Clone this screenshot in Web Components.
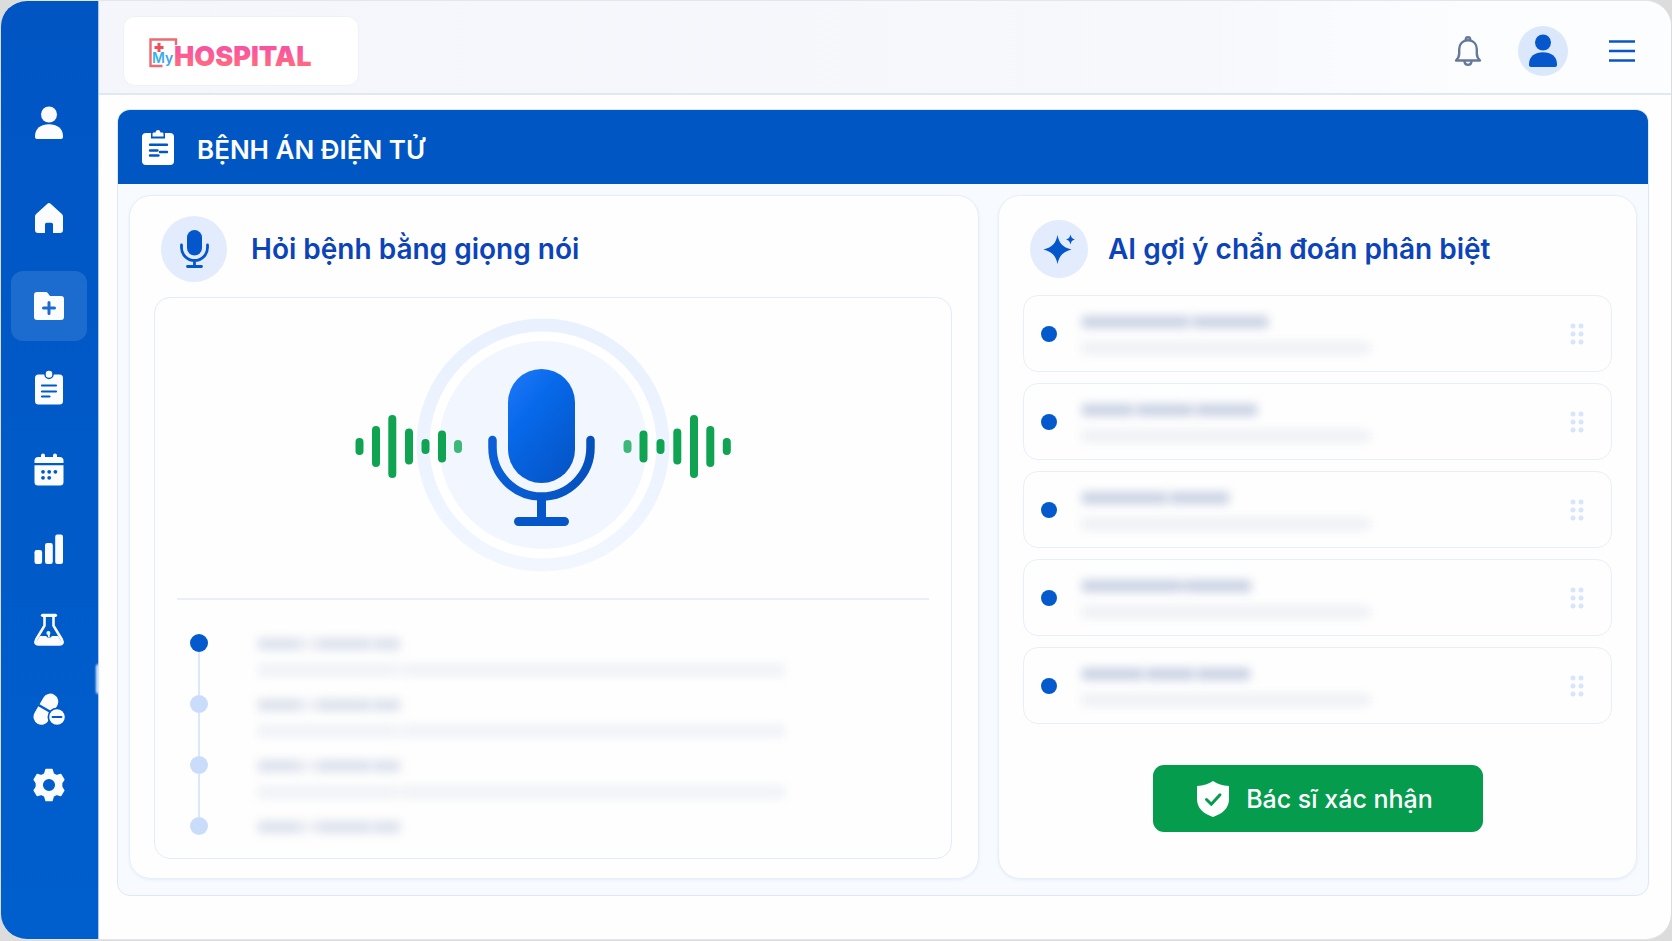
<!DOCTYPE html>
<html lang="vi">
<head>
<meta charset="utf-8">
<meta name="viewport" content="width=device-width, initial-scale=1">
<title>MyHospital – Bệnh án điện tử</title>
<style>
  body { margin: 0; background: #dcdcdc; font-family: Inter, "Noto Sans", sans-serif; }
</style>
</head>
<body>
<hospital-app></hospital-app>

<script>
const define = (name, html, setup) => {
  const tpl = document.createElement('template');
  tpl.innerHTML = html;
  customElements.define(name, class extends HTMLElement {
    constructor() {
      super();
      this.attachShadow({ mode: 'open' }).append(tpl.content.cloneNode(true));
    }
    connectedCallback() {
      if (this.ready) return;
      this.ready = true;
      if (setup) setup(this, this.shadowRoot);
    }
  });
};

/* Icons: [viewBox width, viewBox height, markup]. --cut is the colour behind the icon. */
const ICONS = {
  user: [32, 36, `<circle cx="16" cy="9.5" r="8"/><path d="M2 31c0-7.500 6-11.800 14-11.800S30 23.500 30 31v1c0 1.300-.8 2-2 2H4c-1.200 0-2-.7-2-2z"/>`],
  home: [32, 32, `<path d="M14.400 1.700a2.400 2.400 0 0 1 3.200 0l11 10c.9.800 1.400 1.800 1.400 3V28a3 3 0 0 1-3 3h-7v-8.500c0-1-.7-1.800-1.700-1.800h-4.600c-1 0-1.700.8-1.700 1.800V31H5a3 3 0 0 1-3-3V14.700c0-1.200.5-2.200 1.400-3z"/>`],
  folder: [32, 30, `<path d="M4 1h8.500c1.200 0 2 .5 2.600 1.500L17 5h11a3 3 0 0 1 3 3v18a3 3 0 0 1-3 3H4a3 3 0 0 1-3-3V4a3 3 0 0 1 3-3z"/><path d="M16 11.500v11M10.500 17h11" stroke="var(--cut)" stroke-width="3" stroke-linecap="round"/>`],
  note: [32, 36, `<rect x="2" y="4.500" width="28" height="30" rx="3.500"/><rect x="12" y="0" width="8" height="8.500" rx="4" stroke="var(--cut)" stroke-width="1.500"/><path d="M9 15.500h14M9 21.500h14M9 26.500h7.500" stroke="var(--cut)" stroke-width="2.200" stroke-linecap="round"/>`],
  calendar: [32, 34, `<path d="M5 4h3V2.500a1.500 1.500 0 0 1 4 0V4h8V2.500a1.500 1.500 0 0 1 4 0V4h3c2 0 3.500 1.500 3.500 3.500V10h-29V7.500C1.500 5.500 3 4 5 4z"/><path d="M1.500 12.300h29V29a3.500 3.500 0 0 1-3.500 3.500H5A3.500 3.500 0 0 1 1.500 29z"/><g fill="var(--cut)"><circle cx="10" cy="18.800" r="1.900"/><circle cx="16.200" cy="18.800" r="1.900"/><circle cx="22.400" cy="18.800" r="1.900"/><circle cx="10" cy="24.800" r="1.900"/><circle cx="16.200" cy="24.800" r="1.900"/></g>`],
  chart: [32, 32, `<rect x="1.500" y="17" width="7.600" height="14" rx="2.200"/><rect x="12" y="10" width="7.800" height="21" rx="2.200"/><rect x="22.200" y="1.500" width="7.800" height="29.500" rx="2.200"/>`],
  flask: [32, 34, `<path d="M11.500 2.500v10.200L3.200 26.500C1.600 29.500 2.500 31.500 5.500 31.500h21c3 0 3.900-2 2.300-5L20.500 12.700V2.500" fill="none" stroke="currentColor" stroke-width="2.600"/><path d="M9.500 2.300h13" stroke="currentColor" stroke-width="3.200" stroke-linecap="round"/><path d="M7 23h6l1.500 1.500h3L19 23h6l3.500 5.500c.5 2-.5 3.300-2.500 3.300H6c-2 0-3-1.300-2.500-3.300z"/><circle cx="15.400" cy="20" r="2"/><path d="M15.800 20v4" stroke="currentColor" stroke-width="1.800"/>`],
  pills: [32, 34, `<g transform="rotate(30 13 17)"><path d="M5 16V8.500a8 8 0 0 1 16 0V16z"/><path d="M5 18.500h16V26a8 8 0 0 1-16 0z"/></g><circle cx="24" cy="25" r="9.500" fill="var(--cut)"/><circle cx="24" cy="25" r="7.800"/><path d="M19.500 25h9" stroke="var(--cut)" stroke-width="1.800" stroke-linecap="round"/>`],
  gear: [32, 34, `<path fill-rule="evenodd" d="M13 1.500h6l1.200 4.300 3.300 1.900 4.300-1.200 3 5.200-2.200 3.400v3.800l2.200 3.400-3 5.200-4.300-1.200-3.300 1.900L19 32.500h-6l-1.200-4.300-3.300-1.900-4.300 1.200-3-5.200 2.200-3.400v-3.800L1.200 11.700l3-5.200 4.300 1.200 3.300-1.900zM16 10.200a6.800 6.800 0 1 0 0 13.600 6.800 6.800 0 0 0 0-13.600z" stroke="currentColor" stroke-width="1.500" stroke-linejoin="round"/>`],
  bell: [28, 32, `<g fill="none" stroke="currentColor" stroke-width="2.400" stroke-linejoin="round"><path d="M2 25.500c2-2 3.200-3.800 3.200-7v-4.200c0-5.400 3.500-9 8.800-9s8.800 3.600 8.800 9v4.200c0 3.200 1.200 5 3.200 7z"/><path d="M11.800 5.300V4.500a2.200 2.200 0 0 1 4.400 0v.8"/><path d="M10.500 25.800c0 2.600 1.400 4 3.500 4s3.500-1.400 3.500-4"/></g>`],
  menu: [28, 24, `<path d="M1 2.500h26M1 12h26M1 21.500h26" stroke="currentColor" stroke-width="2.600"/>`],
  clipboard: [34, 38, `<rect x="1" y="5" width="32" height="32" rx="4"/><path d="M10 10.500V6C10 4.300 11 3.500 12.500 3.300h1C14 1.800 15.200 1 17 1s3 .8 3.500 2.300h1C23 3.500 24 4.300 24 6v4.500z" fill="var(--cut)"/><path d="M11.500 8.500V6c0-1 .6-1.600 1.600-1.600h1.500C14.900 2.800 15.700 2 17 2s2.100.8 2.400 2.400h1.500c1 0 1.600.6 1.600 1.600v2.500z"/><path d="M9 16.800h17M9 22.500h7.500M19 24h7M9 27.500h8.500" stroke="var(--cut)" stroke-width="2.400" stroke-linecap="round"/>`],
  mic: [30, 40, `<rect x="8" y="1" width="15" height="25.500" rx="7.500"/><path d="M2.500 16v2.500a13 13 0 0 0 26 0V16M15.500 31.500V37M8.500 37.500h14" fill="none" stroke="currentColor" stroke-width="2.800" stroke-linecap="round"/>`],
  spark: [34, 32, `<path d="M15.500 2c1.800 8.500 5 12 14 14.500-9 2.500-12.200 6-14 14.500-1.800-8.500-5-12-14-14.500 9-2.500 12.200-6 14-14.500z"/><path d="M28.500 1.500c.8 3.200 1.700 4.300 4.500 5-2.800.8-3.700 1.800-4.500 5-.8-3.200-1.700-4.200-4.500-5 2.800-.7 3.700-1.800 4.500-5z"/>`],
  shield: [34, 38, `<path d="M17 1c4.500 3 9.300 4.600 16 5v13c0 9-6 14.500-16 18C7 33.500 1 28 1 19V6c6.700-.4 11.500-2 16-5z"/><path d="M10.500 19.500l4.800 4.800 8.700-9.500" fill="none" stroke="var(--cut)" stroke-width="3" stroke-linecap="round" stroke-linejoin="round"/>`],
  grip: [14, 22, `<circle cx="3" cy="3" r="2.500"/><circle cx="11" cy="3" r="2.500"/><circle cx="3" cy="11" r="2.500"/><circle cx="11" cy="11" r="2.500"/><circle cx="3" cy="19" r="2.500"/><circle cx="11" cy="19" r="2.500"/>`]
};

define('ui-icon', `<style>:host{display:inline-flex;flex:none} svg{display:block}</style>`, (el, root) => {
  const [w, h, body] = ICONS[el.getAttribute('name')];
  root.append(Object.assign(document.createElement('template'), {
    innerHTML: `<svg aria-hidden="true" width="${w}" height="${h}" viewBox="0 0 ${w} ${h}" fill="currentColor">${body}</svg>`
  }).content);
});

/* Sidebar */
define('nav-item', `<style>
  :host { display: flex; align-items: center; justify-content: center; --cut: #0059c7; }
  a { display: flex; align-items: center; justify-content: center; width: 76px; height: 70px; border-radius: 12px; color: #fbfcff; }
  :host([active]) { --cut: #1c6bcf; }
  :host([active]) a { background: #1c6bcf; }
</style><a href="#"><slot></slot></a>`, (el, root) => {
  const a = root.querySelector('a');
  a.setAttribute('aria-label', el.getAttribute('label'));
  if (el.hasAttribute('active')) a.setAttribute('aria-current', 'page');
});

define('side-nav', `<style>
  :host { display: block; position: relative; flex: none; width: 97px; background: linear-gradient(#0055c3, #005fcd); border-right: 1px solid #a9c8f2; }
  nav { display: grid; padding: 74px 11px 0 9px; justify-content: center; grid-template-rows: 96px 94px 82px 82px 82px 76px 86px 72px 80px; }
  .handle { position: absolute; right: -1px; top: 663px; width: 3px; height: 30px; border-radius: 3px 0 0 3px; background: #e8f2ff; filter: blur(1px); }
</style>
<nav aria-label="Chính">
  <nav-item label="Bệnh nhân"><ui-icon name="user"></ui-icon></nav-item>
  <nav-item label="Trang chủ"><ui-icon name="home"></ui-icon></nav-item>
  <nav-item label="Bệnh án" active><ui-icon name="folder"></ui-icon></nav-item>
  <nav-item label="Phiếu khám"><ui-icon name="note"></ui-icon></nav-item>
  <nav-item label="Lịch hẹn"><ui-icon name="calendar"></ui-icon></nav-item>
  <nav-item label="Thống kê"><ui-icon name="chart"></ui-icon></nav-item>
  <nav-item label="Xét nghiệm"><ui-icon name="flask"></ui-icon></nav-item>
  <nav-item label="Thuốc"><ui-icon name="pills"></ui-icon></nav-item>
  <nav-item label="Cài đặt"><ui-icon name="gear"></ui-icon></nav-item>
</nav>
<div class="handle"></div>`);

/* Header */
define('brand-logo', `<style>
  :host { display: flex; align-items: center; box-sizing: border-box; width: 236px; height: 70px; padding-left: 24px; background: #fff; border: 1px solid #edf1f9; border-radius: 12px; }
  svg { display: block; font-family: Inter, sans-serif; }
</style>
<svg width="180" height="50" viewBox="0 0 180 50" role="img" aria-label="MyHOSPITAL">
  <defs>
    <linearGradient id="pink" x1="0" y1="0" x2="0" y2="1"><stop offset=".3" stop-color="#f8559f"/><stop offset=".8" stop-color="#ff6c7c"/></linearGradient>
    <linearGradient id="sky" x1="0" y1="0" x2="1" y2="0"><stop offset="0" stop-color="#2cb8e6"/><stop offset="1" stop-color="#4b9ae8"/></linearGradient>
  </defs>
  <path d="M28 19V13.500H2.500V40h12" fill="none" stroke="#ee6a72" stroke-width="2.400"/>
  <path d="M11 17v9M6.500 21.500h9" stroke="#ee4f56" stroke-width="3"/>
  <text x="4" y="37" font-size="14" font-weight="600" fill="url(#sky)">My</text>
  <text x="26" y="40" font-size="27" font-weight="900" fill="url(#pink)">HOSPITAL</text>
</svg>`);

define('top-bar', `<style>
  :host { display: flex; align-items: center; gap: 36px; box-sizing: border-box; height: 94px; padding: 8px 35px 0 24px; border-bottom: 2px solid #e2e8f1; background: linear-gradient(90deg, #f4f6fb 0%, #f6f8fc 70%, #fcfdff 88%); }
  .grow { flex: 1; }
  button { display: flex; align-items: center; justify-content: center; padding: 0; border: 0; background: none; color: #0d55c4; }
  .bell { color: #66789b; }
  .avatar { width: 50px; height: 50px; border-radius: 50%; background: #dbe8fc; color: #0557cb; }
  .menu { margin-left: 4px; }
</style>
<brand-logo></brand-logo>
<div class="grow"></div>
<button class="bell" aria-label="Thông báo"><ui-icon name="bell"></ui-icon></button>
<button class="avatar" aria-label="Tài khoản"><ui-icon name="user"></ui-icon></button>
<button class="menu" aria-label="Trình đơn"><ui-icon name="menu"></ui-icon></button>`);

/* Card with an icon heading */
define('info-card', `<style>
  :host { display: flex; flex-direction: column; min-width: 0; box-sizing: border-box; background: #fefefe; border: 1px solid #e6eefa; border-radius: 22px; box-shadow: 0 1px 3px #e6eefb; --disc: 66px; --gap: 24px; }
  header { display: flex; align-items: center; gap: var(--gap); height: 66px; padding: 20px 31px 0; }
  .disc { display: flex; align-items: center; justify-content: center; flex: none; width: var(--disc); height: var(--disc); border-radius: 50%; background: #e2ecfc; color: #0456cb; }
  h2 { margin: 0; font-size: 28px; line-height: 36px; font-weight: 600; color: #0b43b8; white-space: nowrap; }
</style>
<header><div class="disc"><slot name="icon"></slot></div><h2><slot name="title"></slot></h2></header>
<slot></slot>`);

/* Redacted text: each number is a word's width; negative numbers are spaces */
define('redacted-line', `<style>
  :host { display: flex; height: 12px; filter: blur(5px); }
  i { display: block; height: 100%; background: var(--ink, #c9d1e3); }
  i.space { opacity: .45; }
</style>`, (el, root) => {
  for (const w of el.getAttribute('words').split(' ').map(Number)) {
    const i = document.createElement('i');
    i.style.width = Math.abs(w) + 'px';
    if (w < 0) i.className = 'space';
    root.append(i);
  }
});

define('voice-stage', `<style>
  :host { display: flex; justify-content: center; margin: 0 22px; padding: 19px 22px 25px 0; border-bottom: 2px solid #e8effb; }
  svg { display: block; }
</style>
<svg width="396" height="256" viewBox="344 317 396 256" role="img" aria-label="Đang ghi âm">
  <defs>
    <linearGradient id="body" x1="0" y1="0" x2=".7" y2="1"><stop offset="0" stop-color="#2079fa"/><stop offset=".4" stop-color="#0769ea"/><stop offset="1" stop-color="#0556c9"/></linearGradient>
    <linearGradient id="arm" x1="0" y1="0" x2="1" y2="0"><stop offset="0" stop-color="#0a5fd8"/><stop offset="1" stop-color="#0451bd"/></linearGradient>
    <linearGradient id="ring" x1="0" y1="0" x2="0" y2="1"><stop offset="0" stop-color="#e9f1fe"/><stop offset="1" stop-color="#f1f6ff"/></linearGradient>
  </defs>
  <circle cx="543" cy="445" r="120" fill="#fff" stroke="url(#ring)" stroke-width="13"/>
  <circle cx="543" cy="445" r="104" fill="#f1f6ff"/>
  <rect x="508" y="369" width="67" height="114" rx="33.500" fill="url(#body)"/>
  <path d="M492.500 440v7.500a49 49 0 0 0 98 0V440" fill="none" stroke="url(#arm)" stroke-width="8.500" stroke-linecap="round"/>
  <path d="M541.500 498v22M518.500 521.500h46" fill="none" stroke="#0557c9" stroke-width="9" stroke-linecap="round"/>
  <g fill="none" stroke="#0fa352" stroke-width="8" stroke-linecap="round">
    <path d="M359.500 442v9M376 430v33M392.300 419v55M409 432.500v28M425.500 443v7M442 434.500v24"/>
    <path d="M643.500 434.500v24M660.500 443v7M677.300 432.500v28M694 419v55M710.300 430v33M726.800 442v9"/>
    <path d="M458 444v5M627.500 444v5" stroke="#3cb978"/>
  </g>
</svg>`);

define('timeline-entry', `<style>
  :host { display: grid; grid-template-columns: 18px 1fr; column-gap: 50px; height: 61px; }
  .rail { display: flex; flex-direction: column; align-items: center; }
  .rail b { flex: none; width: 18px; height: 18px; border-radius: 50%; background: #c9ddfb; }
  .rail span { flex: 1; width: 2px; background: #dbe7fb; }
  .text { display: grid; align-content: start; gap: 14px; padding-top: 4px; }
  .title { --ink: #dce1ec; } .desc { --ink: #eff1f6; }
  :host([current]) b { background: #0459cd; }
  :host([last]) { height: 18px; }
  :host([last]) .desc, :host([last]) .rail span { display: none; }
</style>
<div class="rail"><b></b><span></span></div>
<div class="text"><redacted-line class="title" words="42 -18 52 -4 26"></redacted-line><redacted-line class="desc" words="140 -4 382"></redacted-line></div>`);

define('voice-log', `<style>
  :host { display: block; flex: 1; box-sizing: border-box; margin: 15px 26px 19px 24px; border: 1px solid #e3ecfb; border-radius: 16px; }
  .log { padding: 34px 35px 0; }
</style>
<voice-stage></voice-stage>
<div class="log">
  <timeline-entry current></timeline-entry>
  <timeline-entry></timeline-entry>
  <timeline-entry></timeline-entry>
  <timeline-entry last></timeline-entry>
</div>`);

define('diagnosis-item', `<style>
  :host { display: flex; align-items: center; gap: 25px; box-sizing: border-box; height: 77px; padding: 0 27px 0 17px; border: 1px solid #e8effb; border-radius: 15px; }
  b { flex: none; width: 16px; height: 16px; border-radius: 50%; background: #0459cd; }
  .text { flex: 1; display: grid; gap: 14px; padding-top: 2px; }
  .desc { --ink: #edf0f5; }
  ui-icon { color: #d9e5fa; }
</style>
<b></b><div class="text"></div><ui-icon name="grip"></ui-icon>`,
(el, root) => {
  root.querySelector('.text').innerHTML =
    `<redacted-line words="${el.getAttribute('words')}"></redacted-line><redacted-line class="desc" words="288"></redacted-line>`;
});

define('diagnosis-list', `<style>
  :host { display: grid; gap: 11px; margin: 13px 24px 0; }
</style>
<diagnosis-item words="106 -6 74"></diagnosis-item>
<diagnosis-item words="50 -6 54 -5 60"></diagnosis-item>
<diagnosis-item words="84 -5 58"></diagnosis-item>
<diagnosis-item words="100 -3 66"></diagnosis-item>
<diagnosis-item words="60 -5 46 -5 52"></diagnosis-item>`);

define('confirm-button', `<style>
  :host { display: flex; justify-content: center; }
  button { display: flex; align-items: center; justify-content: center; gap: 16px; width: 330px; height: 67px; padding: 0 6px 0 0; border: 0; border-radius: 11px; background: #059c4e; color: #fff; font: 500 25px/32px Inter, "Noto Sans", sans-serif; --cut: #059c4e; }
</style>
<button type="button"><ui-icon name="shield"></ui-icon><slot></slot></button>`);

define('record-panel', `<style>
  :host { display: flex; flex-direction: column; flex: 1; box-sizing: border-box; margin: 14px 22px 43px 18px; border: 1px solid #dbe8fb; border-radius: 13px; background: #f7fafe; overflow: hidden; }
  .bar { display: flex; align-items: flex-end; gap: 22px; height: 56px; padding: 0 23px 18px; background: #0057c4; color: #fff; --cut: #0057c4; }
  h1 { margin: 0; font-size: 26px; line-height: 32px; font-weight: 600; }
  .cols { flex: 1; display: grid; grid-template-columns: 850fr 639fr; gap: 19px; padding: 11px 11px 16px; }
  .ai { --disc: 58px; --gap: 20px; }
  confirm-button { margin-top: 41px; }
</style>
<div class="bar"><ui-icon name="clipboard"></ui-icon><h1>BỆNH ÁN ĐIỆN TỬ</h1></div>
<div class="cols">
  <info-card>
    <ui-icon slot="icon" name="mic"></ui-icon><span slot="title">Hỏi bệnh bằng giọng nói</span>
    <voice-log></voice-log>
  </info-card>
  <info-card class="ai">
    <ui-icon slot="icon" name="spark"></ui-icon><span slot="title">AI gợi ý chẩn đoán phân biệt</span>
    <diagnosis-list></diagnosis-list>
    <confirm-button>Bác sĩ xác nhận</confirm-button>
  </info-card>
</div>`);

define('hospital-app', `<style>
  :host { display: flex; box-sizing: border-box; margin: 0 1px; min-height: calc(100vh - 1px); border: solid #e3e6ea; border-width: 1px 0; border-radius: 26px; overflow: hidden; background: #fefefe; }
  main { flex: 1; min-width: 0; display: flex; flex-direction: column; }
</style>
<side-nav></side-nav>
<main><top-bar></top-bar><record-panel></record-panel></main>`);
</script>
</body>
</html>
